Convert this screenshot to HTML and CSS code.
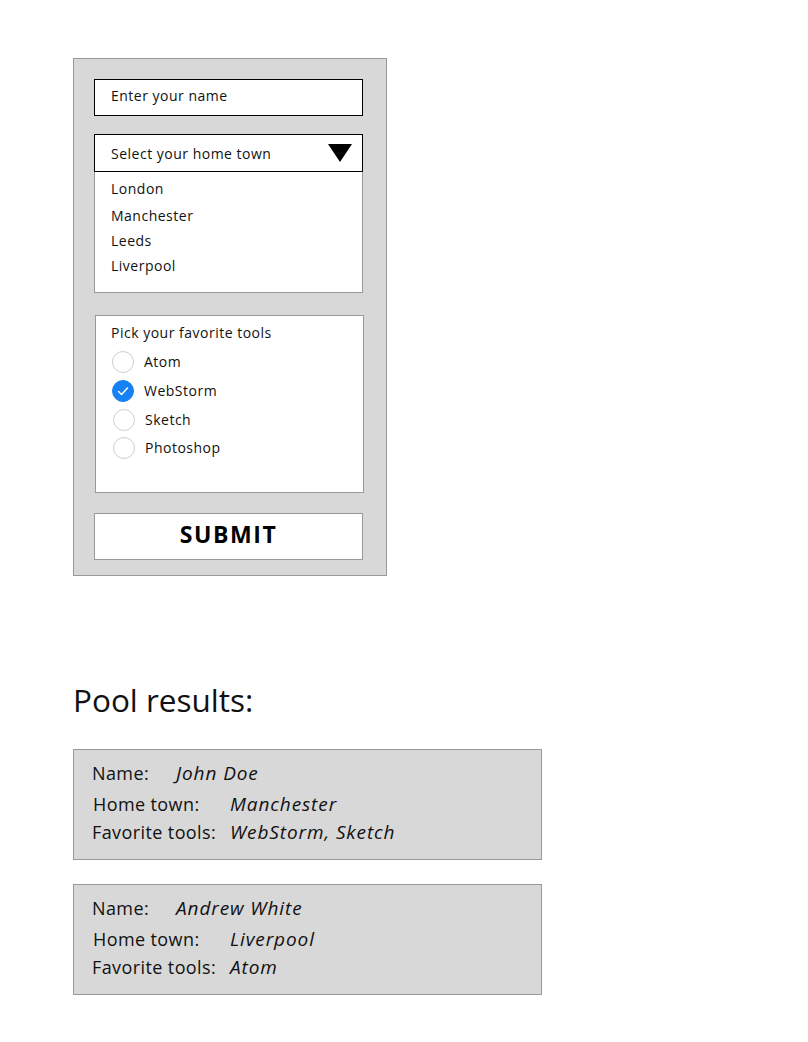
FILE: index.html
```html
<!DOCTYPE html>
<html>
<head>
<meta charset="utf-8">
<link rel="stylesheet" href="styles.css">
</head>
<body>
<div class="page">
  <form class="form">
    <div class="field name-field">Enter your name</div>
    <div class="field select-field">
      <span>Select your home town</span>
      <svg class="caret" width="24" height="18" viewBox="0 0 24 18"><polygon points="0,0 24,0 12,18" fill="#000"/></svg>
    </div>
    <ul class="options">
      <li class="first">London</li>
      <li>Manchester</li>
      <li>Leeds</li>
      <li>Liverpool</li>
    </ul>
    <div class="tools">
      <div class="tools-title">Pick your favorite tools</div>
      <div class="radio-row"><span class="radio"></span><span class="radio-label">Atom</span></div>
      <div class="radio-row"><span class="radio checked"><svg width="22" height="22" viewBox="0 0 22 22"><polyline points="6.5,11.5 9.5,14.5 15.5,8" fill="none" stroke="#fff" stroke-width="1.4" stroke-linecap="round" stroke-linejoin="round"/></svg></span><span class="radio-label">WebStorm</span></div>
      <div class="radio-row shift"><span class="radio"></span><span class="radio-label">Sketch</span></div>
      <div class="radio-row shift last"><span class="radio"></span><span class="radio-label">Photoshop</span></div>
    </div>
    <div class="submit">SUBMIT</div>
  </form>

  <h1 class="results-title">Pool results:</h1>

  <div class="card">
    <div class="row"><span class="lbl lbl-name">Name:</span><span class="val">John Doe</span></div>
    <div class="row row-town"><span class="lbl lbl-town">Home town:</span><span class="val">Manchester</span></div>
    <div class="row"><span class="lbl lbl-tools">Favorite tools:</span><span class="val">WebStorm, Sketch</span></div>
  </div>

  <div class="card">
    <div class="row"><span class="lbl lbl-name">Name:</span><span class="val">Andrew White</span></div>
    <div class="row row-town"><span class="lbl lbl-town">Home town:</span><span class="val">Liverpool</span></div>
    <div class="row"><span class="lbl lbl-tools">Favorite tools:</span><span class="val">Atom</span></div>
  </div>
</div>
</body>
</html>
```

FILE: styles.css
```css
* { box-sizing: border-box; }
body {
  margin: 0;
  background: #fff;
  font-family: "Open Sans", "DejaVu Sans", sans-serif;
  color: #111;
}
.page {
  padding: 58px 0 40px 73px;
}
.form {
  width: 314px;
  height: 518px;
  background: #d8d8d8;
  border: 1px solid #999;
  padding: 20px;
  margin: 0;
  letter-spacing: 0.5px;
}
.field {
  width: 269px;
  background: #fff;
  border: 1px solid #000;
  font-size: 14px;
  padding-left: 16px;
  display: flex;
  align-items: center;
}
.name-field {
  height: 37px;
  padding-bottom: 4px;
}
.select-field {
  height: 38px;
  margin-top: 18px;
  justify-content: space-between;
  padding-right: 10px;
}
.caret { display: block; margin-top: 0; }
.options {
  list-style: none;
  margin: 0;
  padding: 4px 0 0 16px;
  width: 269px;
  height: 121px;
  background: #fff;
  border: 1px solid #999;
  border-top: none;
  font-size: 14px;
}
.options li {
  line-height: 25px;
}
.options li.first { margin-bottom: 2px; }
.tools {
  margin: 22px 0 0 1px;
  width: 269px;
  height: 178px;
  background: #fff;
  border: 1px solid #999;
  padding: 7px 0 0 15px;
  font-size: 14px;
}
.tools-title {
  line-height: 20px;
  margin-bottom: 4px;
}
.radio-row {
  display: flex;
  align-items: center;
  height: 29px;
  margin-left: 1px;
}
.radio-row.shift { margin-left: 2px; }
.radio-row.last { margin-top: -1px; }
.radio {
  width: 22px;
  height: 22px;
  border-radius: 50%;
  border: 1px solid #cfcfcf;
  background: #fff;
  flex: none;
  position: relative;
}
.radio.checked {
  background: #1681f2;
  border-color: #1681f2;
}
.radio.checked svg {
  position: absolute;
  left: -1px;
  top: -1px;
}
.radio-label {
  margin-left: 10px;
}
.submit {
  margin-top: 20px;
  width: 269px;
  height: 47px;
  background: #fff;
  border: 1px solid #999;
  display: flex;
  align-items: center;
  justify-content: center;
  padding-bottom: 5px;
  font-size: 23px;
  font-weight: 700;
  letter-spacing: 1.6px;
  color: #000;
}
.results-title {
  margin: 104px 0 0 0;
  font-size: 31.5px;
  font-weight: 400;
  line-height: 40px;
  color: #111;
}
.card {
  width: 469px;
  height: 111px;
  background: #d8d8d8;
  border: 1px solid #999;
  padding: 9px 0 0 18px;
  margin-top: 29px;
  font-size: 18px;
}
.card + .card { margin-top: 24px; }
.row {
  display: flex;
  line-height: 26px;
  height: 28px;
  align-items: center;
}
.row-town { height: 31px; padding-top: 3px; padding-left: 1px; }
.lbl { letter-spacing: 0.4px; }
.lbl-name { width: 84px; }
.lbl-town { width: 137px; }
.lbl-tools { width: 138px; }
.val { font-style: italic; font-size: 19px; letter-spacing: 0.9px; }
```
